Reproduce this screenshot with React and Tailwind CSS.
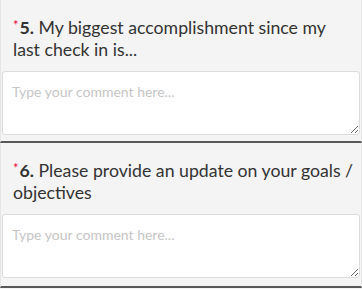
const QUESTIONS = [
  { num: "5.", text: "My biggest accomplishment since my last check in is..." },
  { num: "6.", text: "Please provide an update on your goals / objectives" },
];

function Question({ num, text, first }) {
  return (
    <div
      className={`border-x border-x-[#e6e6e6] border-b-2 border-b-[#585858] px-px ${
        first ? "pt-[17px] pb-[6px]" : "pt-[17px] pb-[8px]"
      }`}
    >
      <h5 className="pl-[11px] pr-[5px] text-[17.7px] leading-[22px] text-[#333333] font-normal">
        <span className="inline-block align-top text-[#e50a3e] text-[13px] leading-[12px] mt-[2px] mr-px">*</span>
        <span className="font-bold">{num}</span> {text}
      </h5>
      <textarea
        rows={3}
        placeholder="Type your comment here..."
        className="mt-[10px] block w-full h-[64px] bg-white border border-[#dcdcdc] rounded-[3px] pt-[11px] pl-[9px] text-[14px] leading-[17px] text-[#333] placeholder:text-[#c6c6c6] outline-none"
      />
    </div>
  );
}

export default function App() {
  return (
    <div
      className="w-[362px] h-[289px] overflow-hidden bg-[#f4f4f4]"
      style={{ fontFamily: "Lato, 'Open Sans', sans-serif" }}
    >
      {QUESTIONS.map((q, i) => (
        <Question key={q.num} {...q} first={i === 0} />
      ))}
    </div>
  );
}
